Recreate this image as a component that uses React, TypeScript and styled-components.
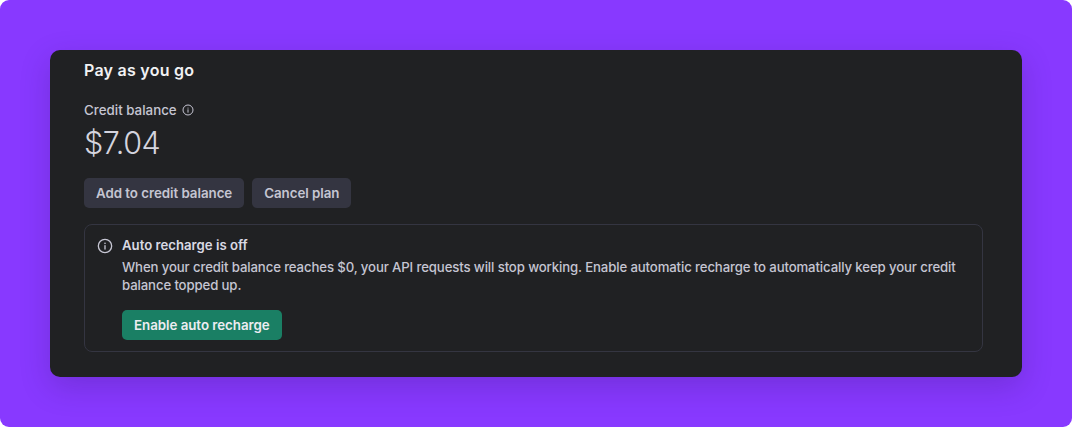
import React from "react";
import styled, { createGlobalStyle } from "styled-components";

const Global = createGlobalStyle`
  html, body { margin: 0; padding: 0; background: #fff; }
  body { font-family: Inter, "Liberation Sans", sans-serif; }
`;

const Stage = styled.div`
  width: 1072px;
  height: 427px;
  box-sizing: border-box;
  padding: 50px;
  background: #8839ff;
  border-radius: 9px;
  overflow: hidden;
`;

const Card = styled.section`
  height: 327px;
  box-sizing: border-box;
  padding: 9px 39px 0 34px;
  background: #202123;
  border-radius: 10px;
  box-shadow: 0 10px 30px rgba(40, 20, 90, 0.22);
`;

const Title = styled.h2`
  margin: 0;
  height: 22px;
  font-size: 16px;
  line-height: 22px;
  font-weight: 600;
  letter-spacing: 0.26px;
  color: #f1f1f3;
`;

const BalanceLabel = styled.div`
  display: flex;
  align-items: center;
  gap: 5px;
  margin-top: 20px;
  height: 18px;
  font-size: 13.35px;
  line-height: 18px;
  font-weight: 500;
  color: #c5c5d2;
`;

const Amount = styled.div`
  margin-top: 5px;
  height: 38px;
  font-size: 30.5px;
  line-height: 38px;
  font-weight: 300;
  letter-spacing: -0.4px;
  color: #d4d4de;
`;

const Actions = styled.div`
  display: flex;
  gap: 8px;
  margin-top: 16px;
`;

const Button = styled.button<{ $primary?: boolean }>`
  height: 30px;
  padding: 0 12px;
  border: 0;
  border-radius: 5px;
  font-family: inherit;
  font-size: 13.35px;
  font-weight: 600;
  letter-spacing: -0.05px;
  white-space: nowrap;
  background: ${(p) => (p.$primary ? "#1a7f64" : "#343541")};
  color: ${(p) => (p.$primary ? "#ececf1" : "#c5c5d2")};
`;

const Notice = styled.div`
  display: flex;
  gap: 8px;
  box-sizing: border-box;
  height: 128px;
  margin-top: 16px;
  padding: 11px 13px 12px 12px;
  border: 1px solid #343541;
  border-radius: 8px;
`;

const NoticeIcon = styled.svg`
  flex: none;
  width: 16px;
  height: 16px;
  margin-top: 2px;
  margin-right: 1px;
  color: #c5c5d2;
`;

const NoticeBody = styled.div`
  flex: 1;
  min-width: 0;
`;

const NoticeTitle = styled.div`
  font-size: 13.2px;
  line-height: 18px;
  font-weight: 600;
  color: #d9d9e3;
`;

const NoticeText = styled.p`
  margin: 4px 0 16px;
  font-size: 13.2px;
  line-height: 18px;
  font-weight: 450;
  letter-spacing: -0.125px;
  color: #c5c5d2;
`;

const SmallInfo = styled.svg`
  width: 12px;
  height: 12px;
  color: #c5c5d2;
`;

const Info = () => (
  <>
    <circle cx="12" cy="12" r="10" fill="none" stroke="currentColor" strokeWidth="2" />
    <path d="M12 16.5v-5" fill="none" stroke="currentColor" strokeWidth="2" strokeLinecap="round" />
    <circle cx="12" cy="8" r="1.2" fill="currentColor" />
  </>
);

export default function App() {
  return (
    <>
      <Global />
      <Stage>
        <Card>
          <Title>Pay as you go</Title>
          <BalanceLabel>
            Credit balance
            <SmallInfo viewBox="0 0 24 24"><Info /></SmallInfo>
          </BalanceLabel>
          <Amount>$7.04</Amount>
          <Actions>
            <Button>Add to credit balance</Button>
            <Button>Cancel plan</Button>
          </Actions>
          <Notice>
            <NoticeIcon viewBox="0 0 24 24"><Info /></NoticeIcon>
            <NoticeBody>
              <NoticeTitle>Auto recharge is off</NoticeTitle>
              <NoticeText>
                When your credit balance reaches $0, your API requests will stop working. Enable automatic recharge to automatically keep your credit balance topped up.
              </NoticeText>
              <Button $primary>Enable auto recharge</Button>
            </NoticeBody>
          </Notice>
        </Card>
      </Stage>
    </>
  );
}
